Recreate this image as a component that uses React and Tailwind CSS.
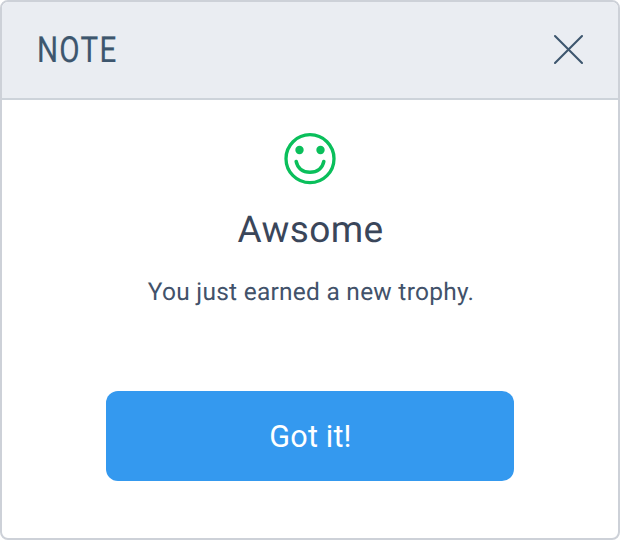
function CloseIcon() {
  return (
    <svg width="32" height="32" viewBox="0 0 32 32" fill="none" stroke="#3d566e" strokeWidth="2.1" strokeLinecap="round">
      <path d="M3 2 30 29M30 2 3 29" />
    </svg>
  );
}

function SmileIcon() {
  return (
    <svg width="52" height="52" viewBox="0 0 52 52" fill="none">
      <circle cx="26" cy="25.7" r="24" stroke="#0abf5b" strokeWidth="3.3" />
      <circle cx="15.5" cy="17" r="4.2" fill="#0abf5b" />
      <circle cx="36.5" cy="17" r="4.2" fill="#0abf5b" />
      <path d="M12.2 28.5C13.5 35 18.5 39.2 26 39.2S38.5 35 39.8 28.5" stroke="#0abf5b" strokeWidth="3.6" strokeLinecap="round" />
    </svg>
  );
}

export default function App() {
  return (
    <div className="flex h-[540px] w-[620px] flex-col overflow-hidden rounded-lg border-2 border-[#cdd1d8] bg-white font-['Roboto',sans-serif] [text-rendering:geometricPrecision]">
      <header className="flex h-[98px] shrink-0 items-center justify-between border-b-2 border-[#cdd3da] bg-[#eaedf2] pr-[34px] pl-[35px]">
        <h1 className="origin-left scale-x-[0.82] text-[36px] leading-none tracking-[1.6px] text-[#3d566e] [-webkit-text-stroke:0.2px_#3d566e]">NOTE</h1>
        <button aria-label="Close"><CloseIcon /></button>
      </header>
      <main className="flex flex-1 flex-col items-center pt-[33px]">
        <SmileIcon />
        <h2 className="mt-6 pl-px text-[37px] leading-[44px] tracking-[0.4px] text-[#3a465a]">Awsome</h2>
        <p className="mt-[24px] pl-[2px] text-[24.5px] leading-[30px] tracking-[0.25px] text-[#42526a]">You just earned a new trophy.</p>
        <button className="mt-[84px] h-[90px] w-[408px] rounded-xl bg-[#3499ef] pt-[2px] pl-px text-[30.5px] tracking-[0.2px] text-white">Got it!</button>
      </main>
    </div>
  );
}
